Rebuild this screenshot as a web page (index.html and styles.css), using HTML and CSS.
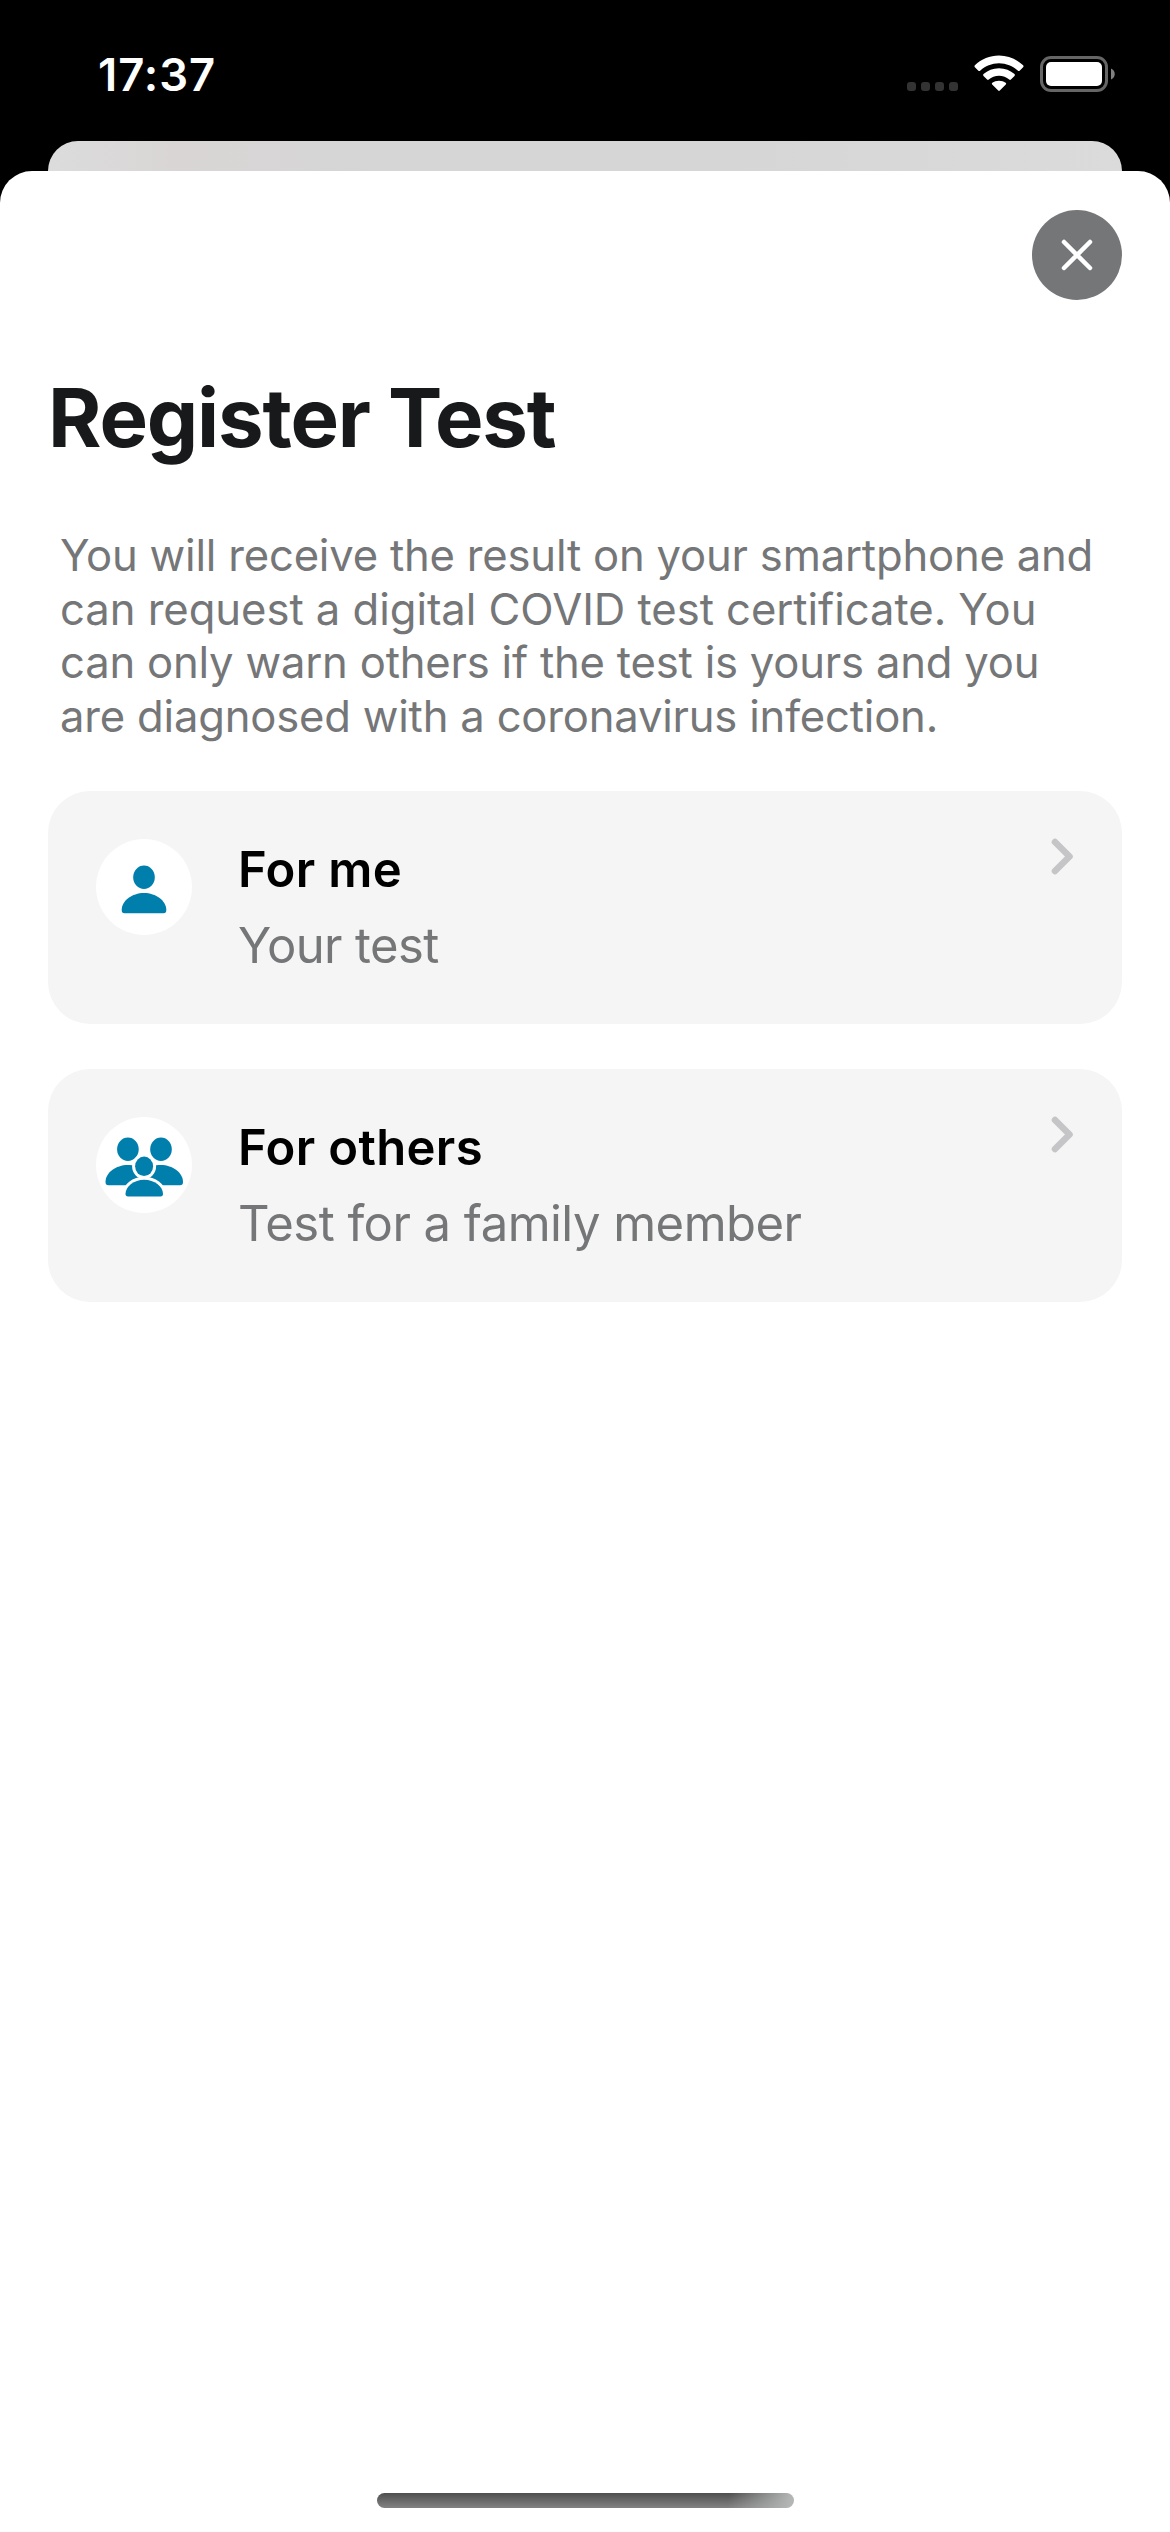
FILE: index.html
```html
<!DOCTYPE html>
<html lang="en">
<head>
  <meta charset="utf-8">
  <title>Register Test</title>
  <link rel="stylesheet" href="styles.css">
</head>
<body>
  <div class="screen">
    <header class="status-bar">
      <time class="clock">17:37</time>
      <div class="indicators">
        <div class="signal"><i></i><i></i><i></i><i></i></div>
        <svg class="wifi" width="50" height="38" viewBox="0 0 50 38" aria-hidden="true">
          <path d="M.9 12.2Q0 11.300.9 10.300C7.400 4.200 15.800.600 25 .600S42.600 4.200 49.100 10.300Q50 11.300 49.100 12.200L45.600 15.700Q44.800 16.500 43.900 15.700C38.800 11 32.200 8.200 25 8.200S11.200 11 6.100 15.700Q5.200 16.500 4.400 15.700Z"/>
          <path d="M9.500 20.900Q8.600 20 9.500 19.100C13.600 15.500 19 13.300 25 13.300S36.400 15.500 40.500 19.100Q41.400 20 40.500 20.900L36.900 24.500Q36.100 25.300 35.200 24.500C32.500 22.200 28.900 20.800 25 20.800S17.500 22.200 14.800 24.500Q13.900 25.300 13.100 24.500Z"/>
          <path d="M18.200 29.500Q17.300 28.600 18.300 27.800C20.100 26.500 22.400 25.700 25 25.700S29.900 26.500 31.700 27.800Q32.700 28.600 31.800 29.500L25.800 35.500Q25 36.300 24.200 35.500Z"/>
        </svg>
        <svg class="battery" width="76" height="36" viewBox="0 0 76 36" aria-hidden="true">
          <rect x="1.500" y="1.500" width="65" height="33" rx="9.500" fill="none" stroke="#666" stroke-width="3"/>
          <rect x="6" y="6" width="56" height="24" rx="5" fill="#fff"/>
          <path d="M71 12.500C76 14.500 76 21.500 71 23.500Z" fill="#808080"/>
        </svg>
      </div>
    </header>
    <div class="sheet-behind"></div>
    <main class="sheet">
      <button class="close" aria-label="Close">
        <svg width="90" height="90" viewBox="0 0 90 90"><path d="M32 32 58 58M58 32 32 58"/></svg>
      </button>
      <h1 class="title">Register Test</h1>
      <p class="intro">You will receive the result on your smartphone and<br><span class="intro-line">can request a digital COVID test certificate. You</span><br>can only warn others if the test is yours and you<br>are diagnosed with a coronavirus infection.</p>
      <section class="options">
        <a class="card">
          <svg class="avatar" width="96" height="96" viewBox="0 0 96 96" aria-hidden="true">
            <circle cx="48" cy="48" r="48" fill="#fff"/>
            <ellipse cx="48" cy="38.200" rx="10.800" ry="11.700"/>
            <path d="M28.500 74.200Q25.700 74.200 25.700 71C25.700 62 36 54.100 48 54.100S70.300 62 70.300 71Q70.300 74.200 67.500 74.200Z"/>
          </svg>
          <div class="card-text">
            <h2 class="card-title">For me</h2>
            <p class="card-subtitle">Your test</p>
          </div>
          <svg class="chevron" width="24" height="40" viewBox="0 0 24 40" aria-hidden="true"><path d="M5 5 19.500 19.500 5 34"/></svg>
        </a>
        <a class="card">
          <svg class="avatar" width="96" height="96" viewBox="0 0 96 96" aria-hidden="true">
            <circle cx="48" cy="48" r="48" fill="#fff"/>
            <ellipse cx="31.900" cy="32.200" rx="10.800" ry="11.700"/>
            <ellipse cx="65" cy="32.200" rx="10.800" ry="11.700"/>
            <path d="M12.500 68.200Q9.500 68.200 9.500 65C9.500 56 19.800 48.100 31.800 48.100S54 56 54 65V68.200Z"/>
            <path d="M84 68.200Q87 68.200 87 65C87 56 76.800 48.100 64.800 48.100S42 56 42 65V68.200Z"/>
            <g class="front-person">
              <ellipse cx="48.100" cy="49.300" rx="9" ry="9.700"/>
              <path d="M32 79.400Q29.500 79.400 29.500 76.800C29.500 69.500 38 62.700 48.200 62.700S67 69.500 67 76.800Q67 79.400 64.500 79.400Z"/>
            </g>
          </svg>
          <div class="card-text">
            <h2 class="card-title">For others</h2>
            <p class="card-subtitle card-subtitle-long">Test for a family member</p>
          </div>
          <svg class="chevron" width="24" height="40" viewBox="0 0 24 40" aria-hidden="true"><path d="M5 5 19.500 19.500 5 34"/></svg>
        </a>
      </section>
      <div class="home-indicator"></div>
    </main>
  </div>
</body>
</html>
```
FILE: styles.css
```css
* {
  box-sizing: border-box;
  margin: 0;
}

body {
  background: #000;
  font-family: Inter, "Liberation Sans", sans-serif;
}

.screen {
  display: flex;
  flex-direction: column;
  width: 1170px;
  height: 2532px;
  overflow: hidden;
}

.status-bar {
  display: flex;
  justify-content: space-between;
  height: 141px;
  padding: 45px 54px 0 98px;
  color: #fff;
}

.clock {
  font-size: 45.4px;
  font-weight: 600;
  line-height: 60px;
  letter-spacing: 0.95px;
}

.indicators {
  display: flex;
  align-items: flex-start;
  padding-top: 10px;
}

.signal {
  display: flex;
  gap: 5px;
  padding-top: 27px;
  margin-right: 16px;
}

.signal i {
  width: 9px;
  height: 9px;
  border-radius: 3px;
  background: #333;
}

.wifi {
  fill: #fff;
  margin-right: 16px;
}

.battery {
  margin-top: 1px;
}

.sheet-behind {
  height: 30px;
  margin: 0 48px;
  border-radius: 30px 30px 0 0;
  background: linear-gradient(90deg, #dcdcdc, #d9d5d5 12%, #d6d6d6 30%, #d6d6d6 65%, #dbdbdb);
}

.sheet {
  display: flex;
  flex: 1;
  flex-direction: column;
  padding: 39px 48px 24px;
  border-radius: 32px 32px 0 0;
  background: #fff;
}

.close {
  align-self: flex-end;
  width: 90px;
  height: 90px;
  padding: 0;
  border: 0;
  border-radius: 50%;
  background: #757678;
}

.close svg {
  display: block;
  fill: none;
  stroke: #fff;
  stroke-width: 4.5;
  stroke-linecap: round;
}

.title {
  margin-top: 68px;
  color: #17191a;
  font-size: 81.5px;
  font-weight: 700;
  line-height: 100px;
  letter-spacing: -1.15px;
}

.intro {
  margin: 61px 0 0 12px;
  color: #757678;
  font-size: 43.6px;
  line-height: 53.7px;
  letter-spacing: -0.2px;
  white-space: nowrap;
}

.intro-line {
  letter-spacing: -0.04px;
}

.options {
  display: flex;
  flex-direction: column;
  gap: 45px;
  margin-top: 47px;
}

.card {
  display: flex;
  height: 233px;
  padding: 48px;
  border-radius: 42px;
  background: #f5f5f5;
}

.avatar {
  flex: none;
  fill: #007fad;
}

.front-person {
  stroke: #fff;
  stroke-width: 6;
  paint-order: stroke;
}

.card-text {
  display: flex;
  flex: 1;
  flex-direction: column;
  gap: 16px;
  padding: 1px 0 0 46px;
}

.card-title {
  color: #000;
  font-size: 49px;
  font-weight: 600;
  line-height: 60px;
  letter-spacing: 0.35px;
}

.card-subtitle {
  color: #757678;
  font-size: 49px;
  line-height: 60px;
  letter-spacing: -0.6px;
}

.card-subtitle-long {
  letter-spacing: -0.53px;
}

.chevron {
  flex: none;
  margin-top: -2px;
  fill: none;
  stroke: #c5c5c7;
  stroke-width: 6.6;
  stroke-linecap: round;
  stroke-linejoin: round;
}

.home-indicator {
  align-self: center;
  width: 417px;
  height: 15px;
  margin-top: auto;
  border-radius: 8px;
  background:
    linear-gradient(100deg, transparent 84%, #b4b6b5 99%),
    linear-gradient(#4f4f4f, #828282);
}
```
